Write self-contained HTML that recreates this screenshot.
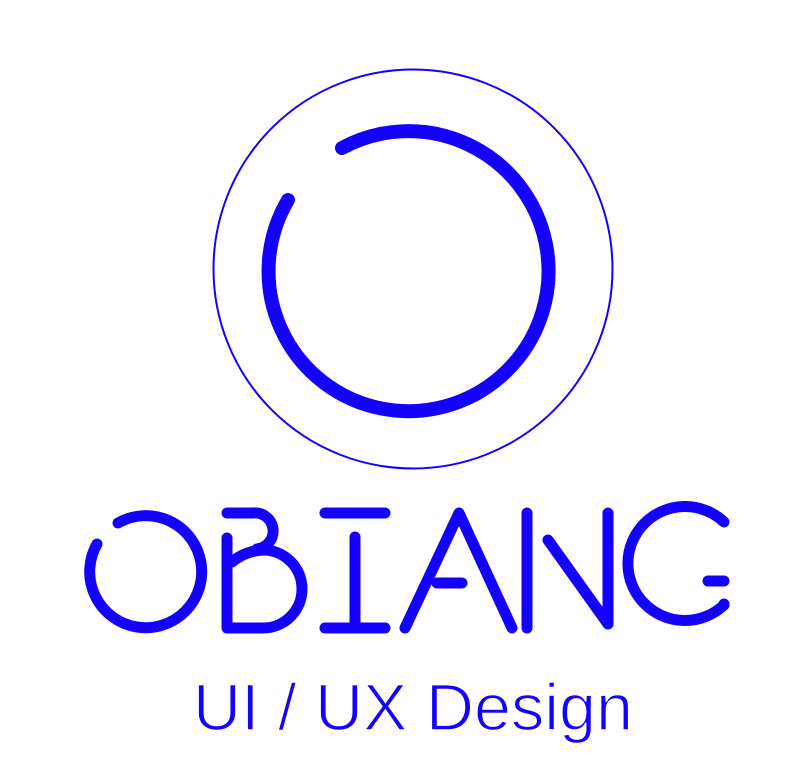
<!DOCTYPE html>
<html><head><meta charset="utf-8"><style>html,body{margin:0;padding:0;background:#fff;width:806px;height:774px;overflow:hidden}</style></head>
<body>
<svg width="806" height="774" viewBox="0 0 806 774" xmlns="http://www.w3.org/2000/svg">
<g fill="none" stroke="#1400ff" stroke-linecap="round" stroke-linejoin="round">
<circle cx="413" cy="269" r="199.5" stroke-width="2"/>
<path d="M342,148 A140,140 0 1 1 288,200" stroke-width="14"/>
<g stroke-width="11">
<path d="M118,523 A56,56 0 1 1 97,544"/>
<path d="M227,538 V628 H263 A39,39 0 0 0 263,550 Q245,551 232,562"/>
<path d="M227,513 H253 A18,18 0 0 1 257,549"/>
<path d="M325,513 H385 M355,537 V628 M325,628 H385"/>
<path d="M405,628 L459,513 L512,628 M437,583 H462"/>
<path d="M527,513 V628"/>
<path d="M548,540 L608,624 V513"/>
<path d="M724,522 A57,57 0 1 0 724,605 V604"/>
<path d="M708,581 H724"/>
</g>
</g>
<text x="193" y="730" font-family="Liberation Sans, sans-serif" font-size="66" fill="#1400ff" textLength="440" lengthAdjust="spacingAndGlyphs" stroke="#fff" stroke-width="1.5" paint-order="normal">UI / UX Design</text>
</svg>
</body></html>
